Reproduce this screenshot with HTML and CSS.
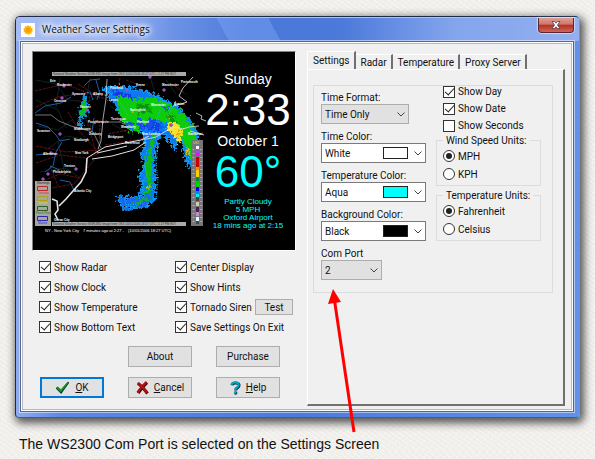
FILE: index.html
```
<!DOCTYPE html>
<html lang="en">

<head>
    <meta charset="UTF-8">
    <meta name="viewport" content="width=device-width, initial-scale=1.0">
    <title>Weather Saver Settings</title>
    <link rel="stylesheet" href="styles.css">
</head>

<body>
    <div class="window">
        <div class="titlebar">
            <svg class="app-icon" viewBox="0 0 14 14">
                <rect width="14" height="14" fill="#fff" />
                <path d="M7 2l1 1.600 1.700-.8.2 1.900 1.900.3-.9 1.600 1.300 1.400-1.800.8.3 1.900-1.900-.1L7.500 12l-1.300-1.400-1.700.7-.2-1.900-1.900-.4.9-1.600L2 6l1.800-.8L3.700 3.300l1.900.2z" fill="#ffb000" />
                <circle cx="7" cy="7" r="2" fill="#f59a00" />
            </svg>
            <span class="title">Weather Saver Settings</span>
            <button class="close" aria-label="Close">
                <svg viewBox="0 0 10 8">
                    <path d="M1 .5h2.500L5 2.200 6.500.5H9L6.500 4 9 7.500H6.500L5 5.800 3.500 7.500H1L3.500 4z" fill="#fff" stroke="#43414d" stroke-width=".8" />
                </svg>
            </button>
        </div>

        <div class="client">
            <div class="left">
                <div class="display">
                    <svg class="radar" viewBox="33 52 262 198">
                        <defs>
                            <filter id="rough" x="-10%" y="-10%" width="120%" height="120%">
                                <feTurbulence type="fractalNoise" baseFrequency="0.35" numOctaves="2" seed="4" />
                                <feDisplacementMap in="SourceGraphic" scale="10" xChannelSelector="R" yChannelSelector="G" />
                            </filter>
                        </defs>
                        <!-- county lines and roads -->
                        <g fill="none" stroke="#20383a" stroke-width=".6">
                            <path d="M36 80l20 4 12 16 20 2 14-8M36 100l22 10 8 18M60 78l-4 30M38 126l20 4 14-10M90 78l-4 22 6 34M46 150l20-14 24 4M110 106l20 12M112 124l18 10M40 172l26-4 14 10M58 140l6 30M150 76l4 14M166 80l10 14" />
                        </g>
                        <g fill="none" stroke="#7d151c" stroke-width=".8">
                            <path d="M35 91l30-7 26 10 20 1M36 107l22-10 28-4 20 6M68 112l12 20 18 20M90 96l-4 22 10 34M100 120l-1 32M36 146l30 6 34-2M36 163l24-8 26 3 12-4M78 84l22 14M40 182l20-8 20 4M50 166l8 20M105 145l20-3 20-4M108 134l30-6M126 80l16 6M120 78l-4 20M172 84l14 10M94 160l-20 24-22 4" stroke-dasharray="3 1" />
                        </g>
                        <g fill="none" stroke="#1f5da6" stroke-width="1">
                            <path d="M35 113l10-7 16-3 10-6M84 86l6-6 10-1M96 80l4 14M36 123l12 4 8 8 4 6 10-2M62 142l-6 10-3 14-8 6M50 166l10 4M90 92l3 8M94 118l-2 14M36 155l18-2M60 180l10 2 4 8M100 90l-3 10" />
                        </g>
                        <!-- rain -->
                        <g filter="url(#rough)">
                            <g stroke-width="2" transform="translate(-2 0)">
                                <path d="M85 95l4-1v9l1 8-4 8-5 1-2-5 4-8zM80 122l6-2-1 6-5 4z" fill="#0a8ce0" />
                                <path d="M86 100l3 9-5 8-3 0 2-8z" fill="#0bc40b" />
                                <path d="M105 88l13-1 14 1 18 4 18 9 11 5 11 12 9 14 3 16-4 12-7 7-4-12-3-15-5 1-2 8-7-9-4-5-4-1-3 9-3 17 1 20-1 20-7 7-24 2-6-12 10 1 14-2 2-12-4-7 6-13-4-10 5-10-3-11-12-4-9-12-8-14z" fill="#0a78f4" stroke="#0a9af4" />
                                <path d="M113 90l18 4 12 9 10 9 10 16-6 4-10-4-14-3-7-12-8-13z" fill="#1238e8" />
                                <path d="M119 97l16 3 22-1 15 6 13 11 9 13 6 15-1 12-5 5-5-14-5-12-8-7-10-7-11-3-3 7-8-1-4 7-9-1-7-12z" fill="#0bcb0b" stroke="#0bcb0b" />
                                <path d="M147 163l4-15 3-14 3 2-3 16v18l-2 24-6 7-13 3 11-8 5-10z" fill="#10bd18" />
                                <path d="M150 118l6 2-2 10-6-4zM160 122l6 6-4 4zM126 122l8 0 2 7-6-2zM166 106l5 2-1 4-4-2zM141 118l4 4-2 8-4-4z" fill="#1550ea" />
                                <path d="M137 104l14 1 3 6-12 3zM168 113l8 4 4 6-8-2z" fill="#079307" />
                                <path d="M172 120l8 4 6 8-5 12-6-9-7-7z" fill="#f5e22c" />
                                <path d="M179 130l4 2-3 6z" fill="#f39b12" />
                                <path d="M189 147l3 2-2 6-2-1zM150 184l2 1-1 5-2-1zM133 109l3 1-1 2z" fill="#cfc31e" />
                                <path d="M121 196l8 3 14-2 7-5 5 8-8 6-21 3z" fill="#1467ef" />
                                <path d="M133 202l12-3 4-4 1 5-12 5z" fill="#16a646" />
                            </g>
                        </g>
                        <g fill="none" stroke="#20c8f0" stroke-width="1" stroke-dasharray="1 1.400">
                            <path d="M147 150l-3 14 3 10-4 8-7 6M158 146l-2 16 2 20-2 16M108 91l14 14 8 14M124 197l3 11M160 110l-6 18 4 10M128 205l14-2M172 106l-8 20" />
                        </g>
                        <!-- coast line -->
                        <g fill="none" stroke="#e4e4e4">
                            <path d="M107 79l-1 20-3 20-2 22-3 8" stroke-width=".7" />
                            <path d="M108 122l20 0M35 115l16 0 8 6 12 5 22 6 8 16" stroke-width=".5" />
                            <path d="M87 158l8-5 10-6 20-4 16-3 8-4M92 159l20-3 22-6 12-8M97 153l18-4 12-3" stroke-width="1" />
                            <path d="M87 158l-1 14-5 10-8 9-7 8-7 7M52 199l5 2 1 9-3 4 3 6" stroke-width="1.600" />
                            <path d="M142 140l14-3 10-6 9-4 8 2 6-2 10-1M193 77l-10 11-4 8 8 6-6 2-8 2M196 113l6 3-1 3 5 2M190 131l14 4" stroke-width=".8" />
                        </g>
                        <g fill="#f33" stroke="#66f" stroke-width=".8">
                            <circle cx="64" cy="86" r="1.300" /><circle cx="62" cy="98" r="1.300" /><circle cx="60" cy="134" r="1.300" />
                            <circle cx="87" cy="110" r="1.300" /><circle cx="76" cy="169" r="1.300" /><circle cx="48" cy="174" r="1.300" />
                            <circle cx="43" cy="179" r="1.300" /><circle cx="51" cy="153" r="1.300" /><circle cx="127" cy="90" r="1.300" />
                            <circle cx="164" cy="90" r="1.300" /><circle cx="150" cy="77" r="1.300" /><circle cx="171" cy="125" r="1.500" />
                        </g>
                        <g class="cities">
                            <text x="50" y="82">Erie</text><text x="57" y="86">Rochester</text><text x="72" y="95">Syracuse</text>
                            <text x="93" y="95">Albany</text><text x="54" y="102">Oneonta</text><text x="80" y="108">Monroe</text>
                            <text x="37" y="132">Scranton</text><text x="88" y="123">Poughkeepsie</text><text x="74" y="130">Middletown</text>
                            <text x="89" y="135">Danbury</text><text x="74" y="141">Newburgh</text><text x="43" y="155">Allentown</text>
                            <text x="75" y="154">New York</text><text x="64" y="167">Trenton</text><text x="53" y="173">Philadelphia</text>
                            <text x="74" y="192">Atlantic City</text><text x="54" y="221">Ocean City</text><text x="110" y="89">Pittsfield</text>
                            <text x="136" y="86">Keene</text><text x="162" y="86">Manchester</text><text x="181" y="83">Portsmouth</text>
                            <text x="109" y="101">Lenox</text><text x="111" y="120">Torrington</text><text x="130" y="111">Springfield</text>
                            <text x="151" y="106">Worcester</text><text x="174" y="105">Boston</text><text x="121" y="128">Waterbury</text>
                            <text x="137" y="123">Hartford</text><text x="108" y="138">Bridgeport</text><text x="142" y="135">New London</text>
                            <text x="188" y="135">Nantucket</text><text x="125" y="144">Riverhead</text>
                        </g>
                        <rect x="52" y="72" width="134" height="4" fill="#aaa" />
                        <text class="banner" x="53" y="75">National Weather Service WSR-88D Image from OKX 10/01/2006 18:27 UTC / 2:27 PM EDT</text>
                        <rect x="52" y="222" width="134" height="4" fill="#aaa" />
                        <text class="banner" x="53" y="225">National Weather Service WSR-88D Image from OKX 10/01/2006 18:27 UTC / 2:27 PM EDT</text>
                        <!-- warning legend -->
                        <rect x="35" y="181" width="16" height="45" fill="#a9a6a0" />
                        <g fill="none" stroke-width="1">
                            <path d="M37.500 186.500h10v4h-10z" stroke="#b82828" />
                            <path d="M37.500 196.500h10v4h-10z" stroke="#a9a01c" />
                            <path d="M37.500 206.500h10v4h-10z" stroke="#285f28" />
                            <path d="M37.500 216.500h10v4h-10z" stroke="#2828a8" />
                        </g>
                        <g class="legend-text">
                            <text x="37" y="184" fill="#222">Warnings</text>
                            <text x="38" y="194" fill="#e22">Tornado</text>
                            <text x="38" y="204" fill="#dd2">Severe</text>
                            <text x="36" y="214" fill="#272">Flash Flood</text>
                            <text x="38" y="224" fill="#22e">Marine</text>
                        </g>
                        <!-- dBZ scale -->
                        <rect x="191" y="140" width="12" height="86" fill="#77757a" />
                        <path d="M193.500 149v74M201 149v74" stroke="#bbb" stroke-width="1.500" stroke-dasharray="1 3" />
                        <text x="193" y="144" class="legend-text" fill="#dd2">DBZ</text>
                        <g>
                            <path d="M196 146h3v3h-3z" fill="#fff" /><path d="M196 150h3v3h-3z" fill="#95c" />
                            <path d="M196 153h3v3h-3z" fill="#f0f" /><path d="M196 157h3v10h-3z" fill="#c00" />
                            <path d="M196 167h3v3h-3z" fill="#f80" /><path d="M196 170h3v7h-3z" fill="#fc0" />
                            <path d="M196 177h3v4h-3z" fill="#083" /><path d="M196 181h3v6h-3z" fill="#0c0" />
                            <path d="M196 187h3v4h-3z" fill="#00e" /><path d="M196 191h3v3h-3z" fill="#08f" />
                            <path d="M196 194h3v3h-3z" fill="#0ee" /><path d="M196 197h3v4h-3z" fill="#444" />
                            <path d="M196 202h3v4h-3z" fill="#cca" /><path d="M196 207h3v5h-3z" fill="#425" />
                            <path d="M196 212h3v4h-3z" fill="#c8c" /><path d="M196 217h3v4h-3z" fill="#dff" />
                            <path d="M196 221h3v3h-3z" fill="#445" />
                        </g>
                        <g class="status">
                            <text x="45" y="232">NY - New York City</text>
                            <text x="83" y="232">7 minutes ago at 2:27 -</text>
                            <text x="128" y="232">(10/01/2006 18:27 UTC)</text>
                        </g>
                    </svg>
                    <div class="clock">
                        <div class="day">Sunday</div>
                        <div class="time">2:33</div>
                        <div class="day">October 1</div>
                        <div class="temp">60°</div>
                        <div class="conditions">
                            Partly Cloudy<br>5 MPH<br>Oxford Airport<br>18 mins ago at 2:15
                        </div>
                    </div>
                </div>

                <div class="options">
                    <label class="check"><input type="checkbox" checked>Show Radar</label>
                    <label class="check"><input type="checkbox" checked>Center Display</label>
                    <label class="check"><input type="checkbox" checked>Show Clock</label>
                    <label class="check"><input type="checkbox" checked>Show Hints</label>
                    <label class="check"><input type="checkbox" checked>Show Temperature</label>
                    <div class="siren">
                        <label class="check"><input type="checkbox" checked>Tornado Siren</label>
                        <button class="btn test">Test</button>
                    </div>
                    <label class="check"><input type="checkbox" checked>Show Bottom Text</label>
                    <label class="check"><input type="checkbox" checked>Save Settings On Exit</label>
                </div>

                <div class="buttons">
                    <button class="btn about">About</button>
                    <button class="btn">Purchase</button>
                    <button class="btn default">
                        <svg viewBox="0 0 15 14">
                            <path d="M.8 7.500l2-1.700 3 3L13 .8l1.200 1L6.200 13z" fill="#0a2a50" />
                            <path d="M.8 6.800l2-1.300 3 3L13 .6l.6.600L6 11.600z" fill="#0aa00e" />
                        </svg>
                        <span><u>O</u>K</span>
                    </button>
                    <button class="btn">
                        <svg viewBox="0 0 13 14">
                            <path d="M2 2.500Q6 5 11.500 12.500M11 1.500Q6 6 2 12" fill="none" stroke="#3a0a0a" stroke-width="3.200" />
                            <path d="M1.600 2Q6 4.500 11 12M10.500 1.200Q5 6 1.600 11.500" fill="none" stroke="#b01212" stroke-width="2.400" />
                        </svg>
                        <span><u>C</u>ancel</span>
                    </button>
                    <button class="btn">
                        <svg viewBox="0 0 11 14">
                            <path d="M2 4.200Q2.500 1.800 6 2 9.500 2.200 9 5 8.600 6.600 6.500 7.600 5.800 8 5.800 9.500" fill="none" stroke="#0b2b5c" stroke-width="3" />
                            <path d="M1.500 3.800Q2 1.300 5.500 1.500 9 1.700 8.500 4.500 8 6 6 7 5.300 7.500 5.300 9" fill="none" stroke="#08a9b5" stroke-width="2.200" />
                            <circle cx="5.600" cy="12" r="1.800" fill="#0b2b5c" />
                            <circle cx="5.200" cy="11.700" r="1.300" fill="#08a9b5" />
                        </svg>
                        <span><u>H</u>elp</span>
                    </button>
                </div>
            </div>

            <div class="right">
                <div class="tabs" role="tablist">
                    <button class="tab active" role="tab">Settings</button>
                    <button class="tab" role="tab">Radar</button>
                    <button class="tab" role="tab">Temperature</button>
                    <button class="tab" role="tab">Proxy Server</button>
                </div>
                <div class="panel">
                    <div class="settings">
                        <div class="fields">
                            <div class="field">
                                <label for="format">Time Format:</label>
                                <div class="combo gray medium">
                                    <select id="format"><option>Time Only</option></select>
                                    <svg class="arrow" viewBox="0 0 8 5"><path d="M.5.5L4 4 7.500.5" /></svg>
                                </div>
                            </div>
                            <div class="field">
                                <label for="timecolor">Time Color:</label>
                                <div class="combo">
                                    <select id="timecolor"><option>White</option></select>
                                    <span class="swatch white"></span>
                                    <svg class="arrow" viewBox="0 0 8 5"><path d="M.5.5L4 4 7.500.5" /></svg>
                                </div>
                            </div>
                            <div class="field">
                                <label for="tempcolor">Temperature Color:</label>
                                <div class="combo">
                                    <select id="tempcolor"><option>Aqua</option></select>
                                    <span class="swatch aqua"></span>
                                    <svg class="arrow" viewBox="0 0 8 5"><path d="M.5.5L4 4 7.500.5" /></svg>
                                </div>
                            </div>
                            <div class="field">
                                <label for="backcolor">Background Color:</label>
                                <div class="combo">
                                    <select id="backcolor"><option>Black</option></select>
                                    <span class="swatch black"></span>
                                    <svg class="arrow" viewBox="0 0 8 5"><path d="M.5.5L4 4 7.500.5" /></svg>
                                </div>
                            </div>
                            <div class="field">
                                <label for="port">Com Port</label>
                                <div class="combo gray small">
                                    <select id="port"><option>2</option></select>
                                    <svg class="arrow" viewBox="0 0 8 5"><path d="M.5.5L4 4 7.500.5" /></svg>
                                </div>
                            </div>
                        </div>

                        <div class="units">
                            <div class="shows">
                                <label class="check"><input type="checkbox" checked>Show Day</label>
                                <label class="check"><input type="checkbox" checked>Show Date</label>
                                <label class="check"><input type="checkbox">Show Seconds</label>
                            </div>
                            <fieldset>
                                <legend>Wind Speed Units:</legend>
                                <label class="check"><input type="radio" name="wind" checked>MPH</label>
                                <label class="check"><input type="radio" name="wind">KPH</label>
                            </fieldset>
                            <fieldset>
                                <legend>Temperature Units:</legend>
                                <label class="check"><input type="radio" name="temp" checked>Fahrenheit</label>
                                <label class="check"><input type="radio" name="temp">Celsius</label>
                            </fieldset>
                        </div>
                    </div>
                </div>
            </div>
        </div>
    </div>

    <p class="caption">The WS2300 Com Port is selected on the Settings Screen</p>

    <!-- points at the com port box -->
    <svg class="pointer" viewBox="0 0 32 144">
        <path d="M6 8L26 143" stroke="#f00" stroke-width="3" />
        <path d="M5 0L13 13 0 15z" fill="#f00" />
    </svg>
</body>

</html>
```
FILE: styles.css
```
* {
  margin: 0;
  padding: 0;
  box-sizing: border-box;
}

body {
  position: relative;
  padding: 16px 15px 0 15px;
  background-color: #f0efeb;
  background-image:
    repeating-linear-gradient(35deg, rgba(255, 255, 255, 0.4) 0 1px, transparent 1px 4px),
    repeating-linear-gradient(-50deg, rgba(205, 203, 195, 0.1) 0 1px, transparent 1px 5px);
  font-family: Roboto, sans-serif;
  font-size: 10px;
  line-height: 13px;
  color: #111;
}

button,
select {
  font: inherit;
  color: inherit;
}

.window {
  border: 1px solid #1c2c48;
  border-right-color: #22b4e8;
  border-bottom-color: #176f9c;
  border-radius: 5px 5px 4px 4px;
  padding: 0 5px 5px 4px;
  background: linear-gradient(to right, #8fabef, #5b89e4 8%, #4c7bdc 50%, #6291e8);
  box-shadow: 2px 3px 8px 2px rgba(0, 0, 0, 0.65);
}

.titlebar {
  display: flex;
  align-items: center;
  height: 24px;
  margin: 0 -5px 0 -4px;
  padding: 0 5px;
  border-top: 1px solid #a9c2f6;
  border-radius: 4px 4px 0 0;
  background:
    linear-gradient(62deg, transparent 37%, rgba(130, 170, 250, 0.4) 37% 46%, transparent 46%),
    linear-gradient(to right, #a5bcf3, #9ab4f1 18%, #6b92e6 28%, #4a78d8 42%, #4c7adb 58%, #84a5ec 78%, #93aff0);
}

.app-icon {
  width: 14px;
  height: 14px;
}

.title {
  flex: 1;
  margin-left: 7px;
  font-family: "Open Sans", sans-serif;
  text-shadow: 0 0 5px #fff, 0 0 6px #fff, 0 0 8px #fff, 0 0 10px #fff;
}

.close {
  display: flex;
  align-self: flex-start;
  align-items: center;
  justify-content: center;
  width: 36px;
  height: 15px;
  border: 1px solid #5b2630;
  border-top: none;
  border-radius: 0 0 4px 4px;
  background: linear-gradient(#dda097, #cf7468 45%, #b52f22 50%, #d0665a);
  box-shadow: 0 0 1px 1px rgba(255, 255, 255, 0.5);
}

.close svg {
  width: 10px;
  height: 8px;
}

.client {
  display: flex;
  gap: 11px;
  border: 1px solid #55658c;
  outline: 1px solid rgba(255, 255, 255, 0.5);
  padding: 9px 8px 5px 11px;
  background-color: #f0f0f0;
  box-shadow: inset 0 0 0 1px #fff, inset 0 0 0 2px #b8b8b8;
}

.left {
  width: 264px;
  padding-bottom: 8px;
}

.display {
  position: relative;
  border: 1px solid #808080;
  border-right-color: #fff;
  border-bottom-color: #fff;
  background-color: #000;
}

.radar {
  display: block;
  width: 100%;
}

.cities,
.legend-text,
.banner {
  font-family: "Liberation Sans", sans-serif;
  font-size: 3px;
}

.cities {
  font-weight: bold;
  fill: #fff;
}

.banner {
  fill: #333;
}

.status {
  font-family: "Liberation Sans", sans-serif;
  font-size: 4px;
  fill: #fff;
}

.clock {
  position: absolute;
  top: 19px;
  right: 3px;
  width: 88px;
  text-align: center;
  font-family: "Liberation Sans", sans-serif;
  color: #fff;
}

.day {
  font-size: 14px;
  line-height: 16px;
}

.time,
.temp {
  font-size: 44px;
  line-height: 46px;
}

.temp {
  color: #0ff;
}

.conditions {
  margin-top: 3px;
  font-size: 8px;
  line-height: 8px;
  color: #0ff;
}

.options {
  display: grid;
  grid-template-columns: 136px 1fr;
  grid-auto-rows: 20px;
  align-items: center;
  margin-top: 6px;
  padding-left: 7px;
}

.check {
  display: flex;
  align-items: center;
  gap: 3px;
  white-space: nowrap;
}

.check input {
  display: flex;
  align-items: center;
  justify-content: center;
  appearance: none;
  width: 12px;
  height: 12px;
  border: 1px solid #333;
  background-color: #fff;
}

.check input[type="radio"] {
  border-radius: 50%;
}

.check input[type="checkbox"]:checked::after {
  content: "";
  width: 4px;
  height: 8px;
  margin-top: -3px;
  border: solid #222;
  border-width: 0 1px 1px 0;
  transform: rotate(42deg);
}

.check input[type="radio"]:checked::after {
  content: "";
  width: 6px;
  height: 6px;
  border-radius: 50%;
  background-color: #222;
}

.siren {
  display: flex;
  align-items: center;
  justify-content: space-between;
  padding-right: 3px;
}

.btn {
  display: flex;
  align-items: center;
  justify-content: center;
  gap: 5px;
  height: 21px;
  border: 1px solid #adadad;
  background-color: #e1e1e1;
}

.btn svg {
  height: 14px;
}

.test {
  width: 38px;
  height: 16px;
}

.default {
  border: 2px solid #0078d7;
}

.buttons {
  display: grid;
  grid-template-columns: repeat(3, 64px);
  gap: 10px 24px;
  margin-top: 9px;
  padding-left: 8px;
}

.about {
  grid-column: 2;
}

.right {
  display: flex;
  flex: 1;
  flex-direction: column;
}

.tabs {
  display: flex;
  align-items: flex-end;
}

.tab {
  height: 15px;
  padding: 0 4px 0 5px;
  border: solid #fff;
  border-width: 1px 2px 0 0;
  border-right-color: #707070;
  background-color: #f0f0f0;
}

.tab.active {
  height: 18px;
  border-left: 1px solid #fff;
}

.panel {
  flex: 1;
  border: 1px solid #fff;
  border-right: 2px solid #707070;
  border-bottom: 2px solid #707070;
  padding: 15px 10px 0 5px;
}

.settings {
  display: flex;
  justify-content: space-between;
  border: 1px solid #dcdcdc;
  padding: 0 11px 12px 7px;
}

.fields {
  display: flex;
  flex-direction: column;
  gap: 6px;
  width: 105px;
  padding-top: 5px;
}

.field label {
  display: block;
  white-space: nowrap;
}

.combo {
  position: relative;
  height: 20px;
}

.combo select {
  appearance: none;
  width: 100%;
  height: 100%;
  border: 1px solid #7a7a7a;
  border-radius: 0;
  padding-left: 3px;
  background-color: #fff;
}

.combo.gray select {
  border-color: #adadad;
  background-color: #e1e1e1;
}

.medium {
  width: 88px;
}

.small {
  width: 61px;
}

.swatch {
  position: absolute;
  top: 4px;
  right: 18px;
  width: 25px;
  height: 12px;
  border: 1px solid #222;
}

.white {
  background-color: #fff;
}

.aqua {
  background-color: #0ff;
}

.black {
  background-color: #000;
}

.arrow {
  position: absolute;
  top: 8px;
  right: 4px;
  width: 8px;
  height: 5px;
  fill: none;
  stroke: #444;
}

.units {
  width: 105px;
}

.shows {
  display: grid;
  grid-auto-rows: 17px;
  padding-left: 7px;
  margin-top: -3px;
}

fieldset {
  min-width: 0;
  margin-bottom: 3px;
  border: 1px solid #dcdcdc;
  padding: 0 6px 2px;
}

fieldset .check {
  height: 18px;
}

legend {
  padding: 0 3px;
  white-space: nowrap;
}

.caption {
  margin: 18px 0 0 4px;
  font-family: "Liberation Sans", sans-serif;
  font-size: 14px;
  line-height: 16px;
}

.pointer {
  position: absolute;
  top: 289px;
  left: 328px;
  width: 32px;
  height: 144px;
}
```
